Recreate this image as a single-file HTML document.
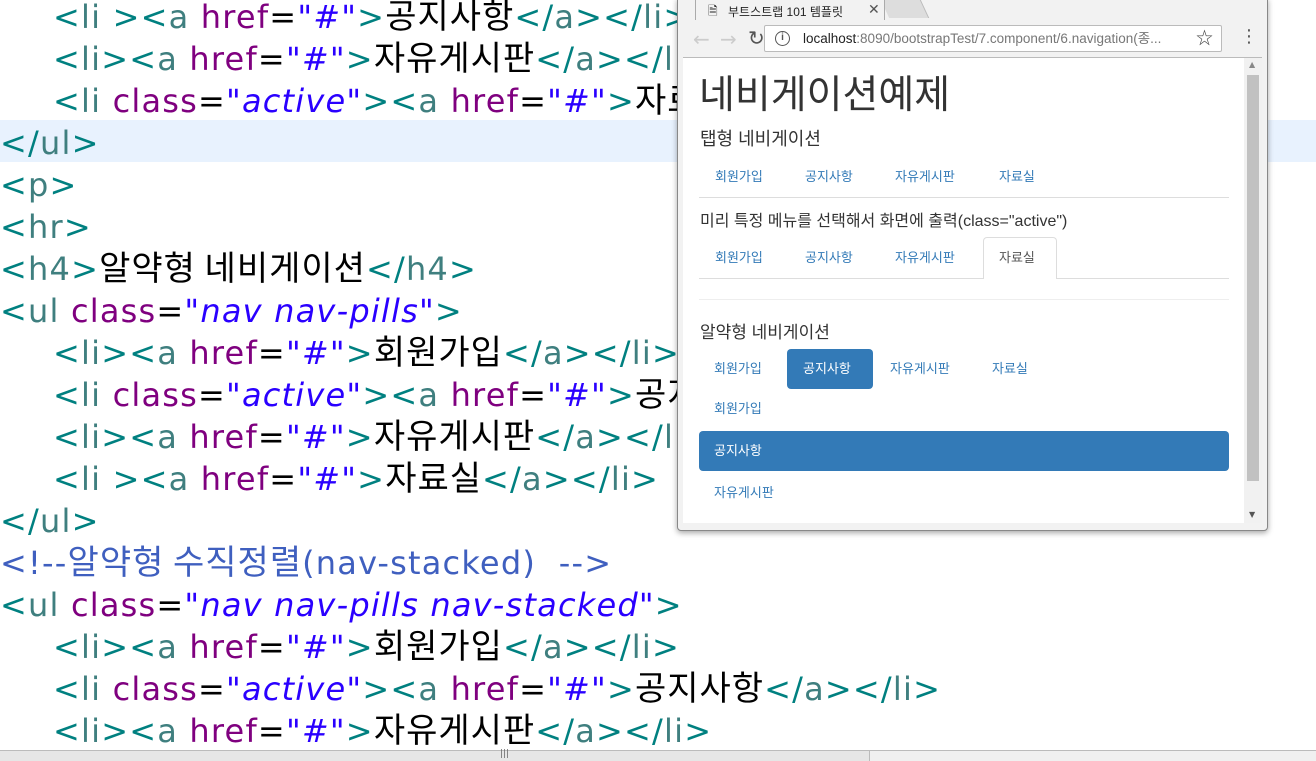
<!DOCTYPE html>
<html><head><meta charset="utf-8"><style>
*{margin:0;padding:0;box-sizing:border-box}
body{width:1316px;height:761px;overflow:hidden;background:#fff;position:relative;font-family:"DejaVu Sans","Noto Sans CJK KR",sans-serif}
.ed{position:absolute;left:0;top:0;width:1316px}
.ln{position:absolute;left:0;height:42px;line-height:42px;font-size:32px;letter-spacing:1.2px;white-space:pre;color:#000}
.k{font-family:"Noto Sans CJK KR",sans-serif;font-size:34px;letter-spacing:1px;line-height:1}
.b{color:#008080}.t{color:#3f7f7f}.at{color:#7f007f}.v{color:#2a00ff;font-style:italic}.c{color:#3f5fbf}
.hl{position:absolute;left:0;top:120px;width:1316px;height:42px;background:#e8f2fe}
.hs{position:absolute;left:0;top:750px;width:1316px;height:11px;background:#f0f0f0;border-top:1px solid #bbb}
.hs div{position:absolute;left:0;top:0;width:870px;height:10px;background:#e6e6e6;border-right:1px solid #bbb}
.win{position:absolute;left:677px;top:-2px;width:591px;height:533px;background:#f2f2f2;border:1px solid #888;border-radius:0 0 4px 4px;box-shadow:0 2px 6px rgba(0,0,0,.35)}
.tab{position:absolute;left:695px;top:0;width:190px;height:21px;background:#f2f2f2;border:1px solid #aaa;border-top:none;border-bottom:none;font:12px "Liberation Sans","Noto Sans CJK KR",sans-serif;color:#222}
.tb{position:absolute;left:683px;top:20px;width:579px;height:38px;background:#f2f2f2;border-bottom:1px solid #bbb}
.url{position:absolute;left:764px;top:25px;width:458px;height:27px;background:#fff;border:1px solid #bbb;border-radius:2px;font:13.5px "Liberation Sans","Noto Sans CJK KR",sans-serif;line-height:25px;padding-left:38px;color:#777}
.ct{position:absolute;left:683px;top:58px;width:561px;height:465px;background:#fff;font-family:"Liberation Sans","Noto Sans CJK KR",sans-serif;color:#333;overflow:hidden}
.sb{position:absolute;left:1244px;top:58px;width:18px;height:465px;background:#f1f1f1}
.a{position:absolute;font-size:13px;color:#337ab7;line-height:16px}
.line{position:absolute;height:1px;background:#ddd}
</style></head><body>
<div class="hl"></div>
<div class="ed">
<div class="ln" style="top:-4px;left:53px"><span class="b">&lt;</span><span class="t">li </span><span class="b">&gt;&lt;</span><span class="t">a</span> <span class="at">href</span>=<span class="v">"#"</span><span class="b">&gt;</span><span class="k">공지사항</span><span class="b">&lt;/</span><span class="t">a</span><span class="b">&gt;&lt;/</span><span class="t">li</span><span class="b">&gt;</span></div>
<div class="ln" style="top:38px;left:53px"><span class="b">&lt;</span><span class="t">li</span><span class="b">&gt;&lt;</span><span class="t">a</span> <span class="at">href</span>=<span class="v">"#"</span><span class="b">&gt;</span><span class="k">자유게시판</span><span class="b">&lt;/</span><span class="t">a</span><span class="b">&gt;&lt;/</span><span class="t">li</span><span class="b">&gt;</span></div>
<div class="ln" style="top:80px;left:53px"><span class="b">&lt;</span><span class="t">li</span> <span class="at">class</span>=<span class="v">"active"</span><span class="b">&gt;&lt;</span><span class="t">a</span> <span class="at">href</span>=<span class="v">"#"</span><span class="b">&gt;</span><span class="k">자료실</span></div>
<div class="ln" style="top:122px"><span class="b">&lt;/</span><span class="t">ul</span><span class="b">&gt;</span></div>
<div class="ln" style="top:164px"><span class="b">&lt;</span><span class="t">p</span><span class="b">&gt;</span></div>
<div class="ln" style="top:206px"><span class="b">&lt;</span><span class="t">hr</span><span class="b">&gt;</span></div>
<div class="ln" style="top:248px"><span class="b">&lt;</span><span class="t">h4</span><span class="b">&gt;</span><span class="k">알약형 네비게이션</span><span class="b">&lt;/</span><span class="t">h4</span><span class="b">&gt;</span></div>
<div class="ln" style="top:290px"><span class="b">&lt;</span><span class="t">ul</span> <span class="at">class</span>=<span class="v">"nav nav-pills"</span><span class="b">&gt;</span></div>
<div class="ln" style="top:332px;left:53px"><span class="b">&lt;</span><span class="t">li</span><span class="b">&gt;&lt;</span><span class="t">a</span> <span class="at">href</span>=<span class="v">"#"</span><span class="b">&gt;</span><span class="k">회원가입</span><span class="b">&lt;/</span><span class="t">a</span><span class="b">&gt;&lt;/</span><span class="t">li</span><span class="b">&gt;</span></div>
<div class="ln" style="top:374px;left:53px"><span class="b">&lt;</span><span class="t">li</span> <span class="at">class</span>=<span class="v">"active"</span><span class="b">&gt;&lt;</span><span class="t">a</span> <span class="at">href</span>=<span class="v">"#"</span><span class="b">&gt;</span><span class="k">공지사항</span></div>
<div class="ln" style="top:416px;left:53px"><span class="b">&lt;</span><span class="t">li</span><span class="b">&gt;&lt;</span><span class="t">a</span> <span class="at">href</span>=<span class="v">"#"</span><span class="b">&gt;</span><span class="k">자유게시판</span><span class="b">&lt;/</span><span class="t">a</span><span class="b">&gt;&lt;/</span><span class="t">li</span><span class="b">&gt;</span></div>
<div class="ln" style="top:458px;left:53px"><span class="b">&lt;</span><span class="t">li </span><span class="b">&gt;&lt;</span><span class="t">a</span> <span class="at">href</span>=<span class="v">"#"</span><span class="b">&gt;</span><span class="k">자료실</span><span class="b">&lt;/</span><span class="t">a</span><span class="b">&gt;&lt;/</span><span class="t">li</span><span class="b">&gt;</span></div>
<div class="ln" style="top:500px"><span class="b">&lt;/</span><span class="t">ul</span><span class="b">&gt;</span></div>
<div class="ln c" style="top:542px">&lt;!--<span class="k">알약형 수직정렬</span>(nav-stacked)  --&gt;</div>
<div class="ln" style="top:584px"><span class="b">&lt;</span><span class="t">ul</span> <span class="at">class</span>=<span class="v">"nav nav-pills nav-stacked"</span><span class="b">&gt;</span></div>
<div class="ln" style="top:626px;left:53px"><span class="b">&lt;</span><span class="t">li</span><span class="b">&gt;&lt;</span><span class="t">a</span> <span class="at">href</span>=<span class="v">"#"</span><span class="b">&gt;</span><span class="k">회원가입</span><span class="b">&lt;/</span><span class="t">a</span><span class="b">&gt;&lt;/</span><span class="t">li</span><span class="b">&gt;</span></div>
<div class="ln" style="top:668px;left:53px"><span class="b">&lt;</span><span class="t">li</span> <span class="at">class</span>=<span class="v">"active"</span><span class="b">&gt;&lt;</span><span class="t">a</span> <span class="at">href</span>=<span class="v">"#"</span><span class="b">&gt;</span><span class="k">공지사항</span><span class="b">&lt;/</span><span class="t">a</span><span class="b">&gt;&lt;/</span><span class="t">li</span><span class="b">&gt;</span></div>
<div class="ln" style="top:710px;left:53px"><span class="b">&lt;</span><span class="t">li</span><span class="b">&gt;&lt;</span><span class="t">a</span> <span class="at">href</span>=<span class="v">"#"</span><span class="b">&gt;</span><span class="k">자유게시판</span><span class="b">&lt;/</span><span class="t">a</span><span class="b">&gt;&lt;/</span><span class="t">li</span><span class="b">&gt;</span></div>
</div>
<div class="hs"><div></div><span style="position:absolute;left:500px;top:-2px;font-size:9px;color:#666">|||</span></div>

<div class="win"></div>
<div style="position:absolute;left:885px;top:0;width:40px;height:18px;background:#ddd;transform:skewX(25deg);border-right:1px solid #bbb"></div>
<div class="tab"><span style="position:absolute;left:12px;top:2px;font-size:12px">&#128462;</span><span style="position:absolute;left:32px;top:3px">부트스트랩 101 템플릿</span><span style="position:absolute;left:172px;top:1px;font-size:14px;color:#555">✕</span></div>
<div class="tb">
<span style="position:absolute;left:10px;top:7px;font:20px 'DejaVu Sans';color:#ccc">←</span>
<span style="position:absolute;left:37px;top:7px;font:20px 'DejaVu Sans';color:#ccc">→</span>
<span style="position:absolute;left:65px;top:6px;font:20px 'DejaVu Sans';color:#555">↻</span>
<span style="position:absolute;left:557px;top:6px;font:18px 'DejaVu Sans';color:#555">⋮</span>
</div>
<div class="url"><span style="position:absolute;left:10px;top:5px;width:15px;height:15px;border:1.5px solid #555;border-radius:50%;font:bold 10px 'Liberation Sans';color:#555;text-align:center;line-height:12px">i</span><span style="color:#222">localhost</span>:8090/bootstrapTest/7.component/6.navigation(종...<span style="position:absolute;right:8px;top:0;font-size:17px;color:#444">☆</span></div>
<div class="ct">
<div style="position:absolute;left:16px;top:16px;font-size:39px;line-height:44px">네비게이션예제</div>
<div style="position:absolute;left:17px;top:67px;font-size:18px">탭형 네비게이션</div>
<div class="a" style="left:32px;top:111px">회원가입</div><div class="a" style="left:122px;top:111px">공지사항</div><div class="a" style="left:212px;top:111px">자유게시판</div><div class="a" style="left:316px;top:111px">자료실</div>
<div class="line" style="left:16px;top:139px;width:530px"></div>
<div style="position:absolute;left:17px;top:149px;font-size:16px">미리 특정 메뉴를 선택해서 화면에 출력(class="active")</div>
<div class="a" style="left:32px;top:192px">회원가입</div><div class="a" style="left:122px;top:192px">공지사항</div><div class="a" style="left:212px;top:192px">자유게시판</div>
<div class="line" style="left:16px;top:220px;width:530px"></div>
<div style="position:absolute;left:300px;top:179px;width:74px;height:42px;background:#fff;border:1px solid #ddd;border-bottom:none;border-radius:4px 4px 0 0"></div>
<div class="a" style="left:316px;top:192px;color:#555">자료실</div>
<div class="line" style="left:16px;top:241px;width:530px;background:#eee"></div>
<div style="position:absolute;left:17px;top:260px;font-size:17px">알약형 네비게이션</div>
<div class="a" style="left:31px;top:303px">회원가입</div>
<div style="position:absolute;left:104px;top:291px;width:86px;height:40px;background:#337ab7;border-radius:4px"></div>
<div class="a" style="left:120px;top:303px;color:#fff">공지사항</div>
<div class="a" style="left:207px;top:303px">자유게시판</div><div class="a" style="left:309px;top:303px">자료실</div>
<div class="a" style="left:31px;top:343px">회원가입</div>
<div style="position:absolute;left:16px;top:373px;width:530px;height:40px;background:#337ab7;border-radius:4px"></div>
<div class="a" style="left:31px;top:385px;color:#fff">공지사항</div>
<div class="a" style="left:31px;top:427px">자유게시판</div>
</div>
<div class="sb"><div style="position:absolute;left:3px;top:17px;width:12px;height:406px;background:#c1c1c1"></div><span style="position:absolute;left:5px;top:2px;font-size:8px;color:#888">▲</span><span style="position:absolute;left:5px;top:452px;font-size:8px;color:#555">▼</span></div>
</body></html>
